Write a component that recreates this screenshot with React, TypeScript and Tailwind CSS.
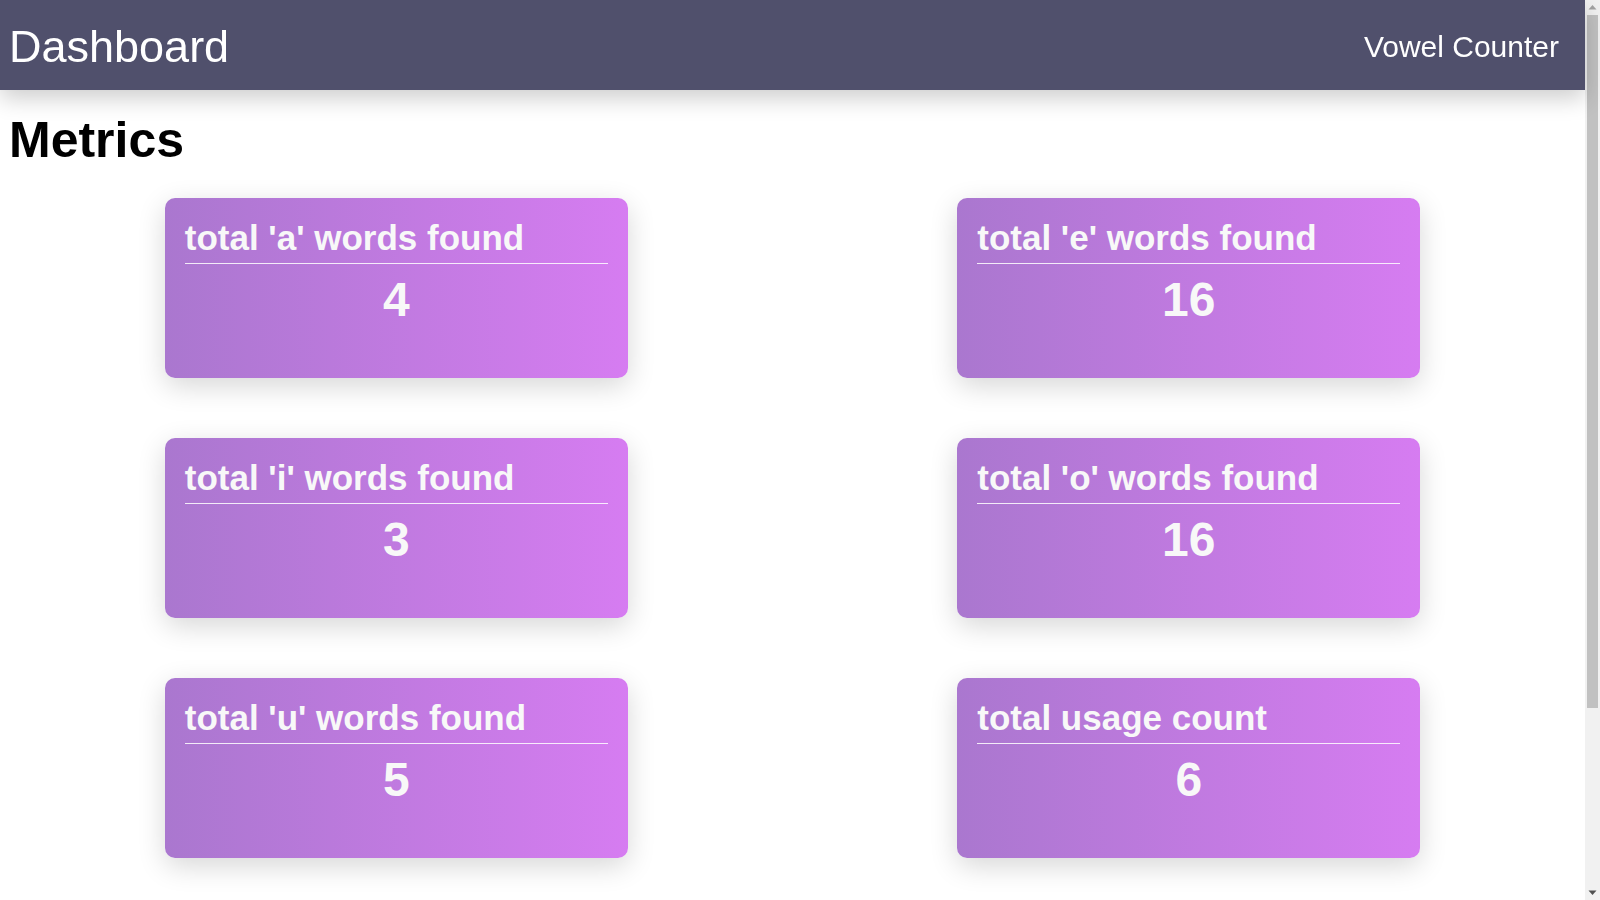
import React from "react";

const cards = [
  { title: "total 'a' words found", value: 4 },
  { title: "total 'e' words found", value: 16 },
  { title: "total 'i' words found", value: 3 },
  { title: "total 'o' words found", value: 16 },
  { title: "total 'u' words found", value: 5 },
  { title: "total usage count", value: 6 },
];

function FakeScrollbar() {
  return (
    <div className="fixed top-0 right-0 w-[15px] h-[900px] bg-[#f1f1f1] flex flex-col items-center">
      <svg width="15" height="15" viewBox="0 0 15 15" className="shrink-0">
        <polygon points="3.5,9.5 11.5,9.5 7.5,5" fill="#a3a3a3" />
      </svg>
      <div className="w-[11px] h-[693px] bg-[#c1c1c1]" />
      <div className="flex-1" />
      <svg width="15" height="15" viewBox="0 0 15 15" className="shrink-0">
        <polygon points="3.5,5.5 11.5,5.5 7.5,10" fill="#505050" />
      </svg>
    </div>
  );
}

export default function App() {
  return (
    <div className="w-[1585px] bg-white text-black font-['Liberation_Sans',Arial,sans-serif] pb-[272px]">
      <header className="h-[90px] bg-[#50506c] flex items-center justify-between shadow-[0_8px_22px_rgba(0,0,0,0.2)] relative z-10">
        <div className="pl-[9px] pt-[3px] text-[45px] leading-none text-white">Dashboard</div>
        <div className="pr-[26px] pt-[3px] text-[30px] leading-none text-white">Vowel Counter</div>
      </header>
      <h1 className="mt-[25px] pl-[9px] text-[50px] leading-none font-bold">Metrics</h1>
      <div className="mt-[33px] grid grid-cols-2 gap-y-[60px] justify-items-center">
        {cards.map((c) => (
          <div
            key={c.title}
            className="w-[463px] h-[180px] rounded-[10px] bg-linear-to-r from-[#aa77cf] to-[#d67cf1] shadow-[0_8px_28px_rgba(0,0,0,0.16)] px-[20px] pt-[22px] text-[#f8f8f8]"
          >
            <div className="text-[35px] leading-none font-bold pb-[8px] border-b border-white/85">{c.title}</div>
            <div className="mt-[12px] text-[48px] leading-none font-bold text-center">{c.value}</div>
          </div>
        ))}
      </div>
      <FakeScrollbar />
    </div>
  );
}
